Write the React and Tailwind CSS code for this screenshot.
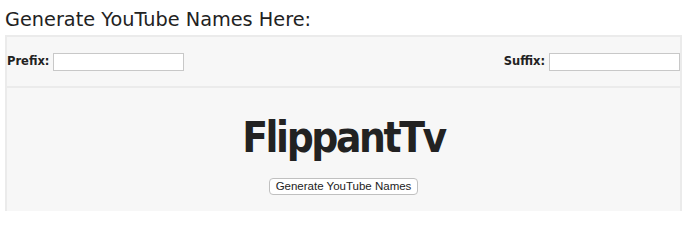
export default function App() {
  return (
    <div className="w-[688px] h-[211px] overflow-hidden bg-white" style={{ fontFamily: '"DejaVu Sans", Verdana, sans-serif' }}>
      <div className="pl-[5px] pt-[7px] h-[35px] text-[19.3px] leading-[26px] text-[#222]">Generate YouTube Names Here:</div>
      <div className="ml-[5px] w-[677px] border-2 border-[#ebebeb] bg-[#f7f7f7]">
        <div className="h-[51px] flex items-center justify-between pl-0 pr-0 border-b-2 border-[#ebebeb]">
          <div className="flex items-center gap-[4px]">
            <span className="text-[11.5px] font-bold text-[#222]">Prefix:</span>
            <input className="w-[131px] h-[18px] bg-white border border-[#c8c8c8]" />
          </div>
          <div className="flex items-center gap-[4px]">
            <span className="text-[11.5px] font-bold text-[#222]">Suffix:</span>
            <input className="w-[131px] h-[18px] bg-white border border-[#c8c8c8]" />
          </div>
        </div>
        <div className="flex flex-col items-center pt-[25px] h-[140px]">
          <div className="text-[42px] leading-[50px] font-bold text-[#222] tracking-[-2.4px]" style={{ fontFamily: '"DejaVu Sans Condensed", "DejaVu Sans", sans-serif' }}>FlippantTv</div>
          <button className="mt-[15px] h-[17px] px-[6px] bg-white border border-[#c0c0c0] rounded-[4px] text-[11.5px] leading-[15px] text-[#222]" style={{ fontFamily: '"Liberation Sans", Arial, sans-serif' }}>Generate YouTube Names</button>
        </div>
      </div>
    </div>
  );
}
